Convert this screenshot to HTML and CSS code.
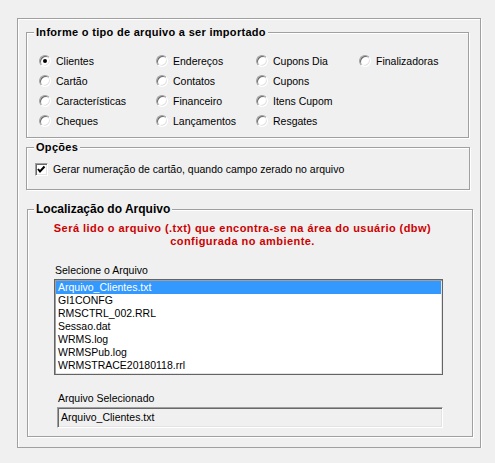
FILE: index.html
```html
<!DOCTYPE html>
<html lang="pt-BR">
<head>
  <meta charset="UTF-8">
  <title>Importação de Arquivo</title>
  <link rel="stylesheet" href="styles.css">
</head>
<body>

  <div class="panel">

    <!-- tipo de arquivo -->
    <fieldset class="group group--tipo">
      <legend class="group__title">Informe o tipo de arquivo a ser importado</legend>
      <div class="options">
        <label class="option"><span class="radio radio--checked"></span>Clientes</label>
        <label class="option"><span class="radio"></span>Cartão</label>
        <label class="option"><span class="radio"></span>Características</label>
        <label class="option"><span class="radio"></span>Cheques</label>

        <label class="option"><span class="radio"></span>Endereços</label>
        <label class="option"><span class="radio"></span>Contatos</label>
        <label class="option"><span class="radio"></span>Financeiro</label>
        <label class="option"><span class="radio"></span>Lançamentos</label>

        <label class="option"><span class="radio"></span>Cupons Dia</label>
        <label class="option"><span class="radio"></span>Cupons</label>
        <label class="option"><span class="radio"></span>Itens Cupom</label>
        <label class="option"><span class="radio"></span>Resgates</label>

        <label class="option"><span class="radio"></span>Finalizadoras</label>
      </div>
    </fieldset>

    <!-- opcoes -->
    <fieldset class="group group--opcoes">
      <legend class="group__title">Opções</legend>
      <label class="check-row">
        <span class="checkbox">
          <svg width="13" height="13" viewBox="0 0 13 13">
            <polyline points="3,6 5,8.5 9.5,3.5" fill="none" stroke="#000" stroke-width="2"/>
          </svg>
        </span>
        Gerar numeração de cartão, quando campo zerado no arquivo
      </label>
    </fieldset>

    <!-- localizacao -->
    <fieldset class="group group--local">
      <legend class="group__title group__title--big">Localização do Arquivo</legend>
      <p class="notice">
        Será lido o arquivo (.txt) que encontra-se na área do usuário (dbw)<br>
        configurada no ambiente.
      </p>

      <div class="field-label field-label--list">Selecione o Arquivo</div>
      <ul class="listbox">
        <li class="listbox__item listbox__item--selected">Arquivo_Clientes.txt</li>
        <li class="listbox__item">GI1CONFG</li>
        <li class="listbox__item">RMSCTRL_002.RRL</li>
        <li class="listbox__item">Sessao.dat</li>
        <li class="listbox__item">WRMS.log</li>
        <li class="listbox__item">WRMSPub.log</li>
        <li class="listbox__item">WRMSTRACE20180118.rrl</li>
      </ul>

      <div class="field-label field-label--input">Arquivo Selecionado</div>
      <div class="textbox">Arquivo_Clientes.txt</div>
    </fieldset>

  </div>

</body>
</html>
```

FILE: styles.css
```css
:root {
  --clr-bg: #f0f0f0;
  --clr-line: #a0a0a0;
  --clr-dark: #696969;
  --clr-light: #e3e3e3;
  --clr-select: #3399ff;
  --clr-red: #cc0000;
}

* {
  box-sizing: border-box;
}

body {
  margin: 0;
  background: var(--clr-bg);
  font-family: "Liberation Sans", Arial, sans-serif;
  font-size: 10.5px;
  line-height: 13px;
  color: #000;
}

/* moldura externa */
.panel {
  width: 464px;
  height: 430px;
  margin: 18px 0 0 17px;
  padding: 7px 0 0 8px;
  border: 1px solid var(--clr-line);
  box-shadow: inset 1px 1px 0 #fff, 1px 1px 0 #fff;
}

.group {
  margin: 0;
  padding: 0;
  min-width: 0;
  border: 1px solid var(--clr-line);
  box-shadow: inset 1px 1px 0 #fff, 1px 1px 0 #fff;
}

.group__title {
  margin-left: 7px;
  padding: 0 2px;
  font-size: 11px;
  font-weight: bold;
  letter-spacing: 0.3px;
  line-height: 13px;
  background: var(--clr-bg);
}

.group__title--big {
  margin-left: 6px;
  font-size: 12px;
  letter-spacing: 0;
  line-height: 14px;
}

/* tipo de arquivo */
.group--tipo {
  width: 443px;
  padding: 12px 0 6px 0;
}

.options {
  margin-left: 12px;
  display: grid;
  grid-template-columns: 117px 100px 103px auto;
  grid-template-rows: repeat(4, 20px);
  grid-auto-flow: column;
}

.option {
  display: flex;
  align-items: center;
}

.radio {
  width: 12px;
  height: 12px;
  margin-right: 5px;
  border-radius: 50%;
  background: #fff;
  border: 1px solid;
  border-color: var(--clr-line) #fff #fff var(--clr-line);
  box-shadow: inset 1px 1px 0 var(--clr-dark), inset -1px -1px 0 var(--clr-light);
  display: flex;
  align-items: center;
  justify-content: center;
}

.radio--checked::after {
  content: '';
  width: 4px;
  height: 4px;
  border-radius: 50%;
  background: #000;
}

/* opcoes */
.group--opcoes {
  width: 444px;
  margin-top: 3px;
  padding: 9px 0 13px 0;
}

.check-row {
  margin-left: 8px;
  display: flex;
  align-items: center;
}

.checkbox {
  width: 13px;
  height: 13px;
  margin-right: 5px;
  background: #fff;
  border: 1px solid;
  border-color: var(--clr-line) #fff #fff var(--clr-line);
  box-shadow: inset 1px 1px 0 var(--clr-dark), inset -1px -1px 0 var(--clr-light);
  position: relative;
}

.checkbox svg {
  position: absolute;
  top: -1px;
  left: -1px;
}

/* localizacao */
.group--local {
  width: 446px;
  margin: 12px 0 0 1px;
  padding: 6px 0 8px 0;
}

.notice {
  margin: 0 15px 0 0;
  text-align: center;
  font-size: 11px;
  font-weight: bold;
  letter-spacing: 0.45px;
  color: var(--clr-red);
}

.field-label--list {
  margin: 16px 0 2px 27px;
}

.field-label--input {
  margin: 17px 0 2px 30px;
}

.listbox {
  list-style: none;
  width: 389px;
  height: 96px;
  margin: 0 0 0 26px;
  padding: 1px;
  overflow: hidden;
  background: #fff;
  border: 1px solid #646464;
  box-shadow: inset 1px 1px 0 var(--clr-line), inset -1px -1px 0 var(--clr-light);
}

.listbox__item {
  padding: 0 2px;
  height: 13px;
  white-space: nowrap;
}

.listbox__item--selected {
  background: var(--clr-select);
  color: #fff;
}

.textbox {
  width: 386px;
  height: 21px;
  margin-left: 29px;
  padding: 3px 3px 0;
  border: 1px solid;
  border-color: var(--clr-line) #fff #fff var(--clr-line);
  box-shadow: inset 1px 1px 0 var(--clr-dark), inset -1px -1px 0 var(--clr-light);
}
```
